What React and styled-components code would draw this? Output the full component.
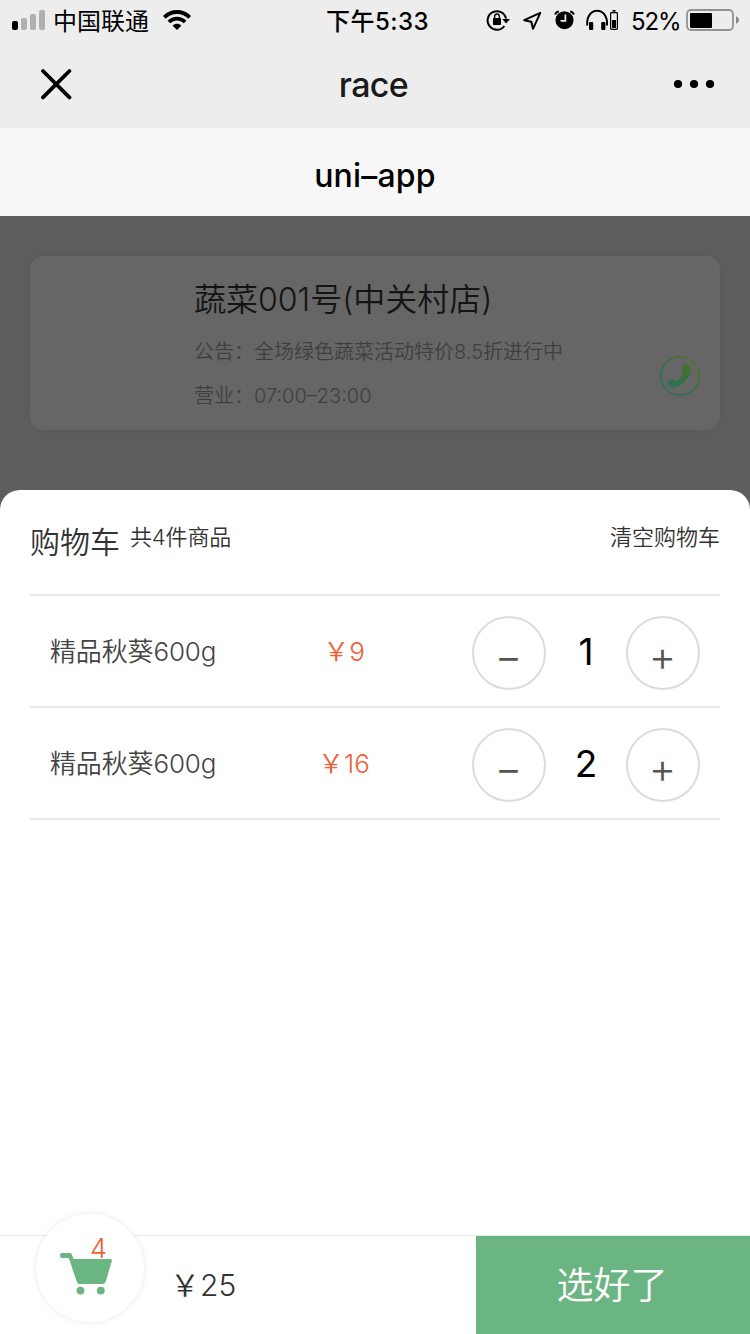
import React from 'react';
import styled, { createGlobalStyle } from 'styled-components';

const GlobalStyle = createGlobalStyle`
  * { box-sizing: border-box; }
  body {
    margin: 0;
    font-family: Inter, "Noto Sans CJK SC", sans-serif;
    font-weight: 350;
    color: #333;
  }
  svg { display: block; flex: none; }
`;

const Screen = styled.div`
  width: 750px;
  height: 1334px;
  display: flex;
  flex-direction: column;
  overflow: hidden;
  background: #5f5f5f;
`;

const Chrome = styled.header`
  height: 128px;
  background: #ededed;
  flex: none;
`;

const StatusBar = styled.div`
  height: 40px;
  display: grid;
  grid-template-columns: 1fr 110px 1fr;
  grid-template-rows: 40px;
  align-items: center;
  color: #000;
`;

const StatusGroup = styled.div`
  display: flex;
  align-items: center;
  height: 40px;
  justify-content: ${(p) => (p.$end ? 'flex-end' : 'flex-start')};
  padding: ${(p) => (p.$end ? '0 11px 0 0' : '0 0 0 12px')};
`;

const Carrier = styled.span`
  font-size: 24px;
  line-height: 38px;
  font-weight: 400;
  padding-top: 3px;
  margin: 0 14px 0 8px;
`;

const Clock = styled.div`
  font-size: 24px;
  line-height: 38px;
  font-weight: 500;
  text-align: center;
  white-space: nowrap;
  letter-spacing: 0.5px;
  padding: 3px 0 0 5px;
`;

const Percent = styled.span`
  font-size: 24px;
  line-height: 38px;
  font-weight: 400;
  width: 48px;
  padding-top: 3px;
  margin: 0 7px 0 13px;
  letter-spacing: -1.1px;
  white-space: nowrap;
`;

const NavBar = styled.div`
  height: 88px;
  padding: 0 35px 0 40px;
  display: grid;
  grid-template-columns: 34px 1fr 42px;
  grid-template-rows: 88px;
  align-items: center;
`;

const NavTitle = styled.div`
  text-align: center;
  font-size: 34px;
  line-height: 86px;
  font-weight: 450;
  letter-spacing: -0.6px;
  color: #1a1a1a;
  padding-top: 2px;
`;

const PageTitle = styled.h1`
  margin: 0;
  height: 88px;
  flex: none;
  background: #f7f7f7;
  text-align: center;
  font-size: 32px;
  line-height: 96px;
  font-weight: 500;
  letter-spacing: 0.2px;
  color: #000;
`;

const ShopArea = styled.section`
  height: 274px;
  flex: none;
  padding: 40px 30px 0;
`;

const ShopCard = styled.div`
  height: 174px;
  padding: 21px 20px 0 164px;
  border-radius: 14px;
  background: #666;
  box-shadow: 0 0 20px rgba(0, 0, 0, 0.1);
  display: flex;
  justify-content: space-between;
`;

const ShopName = styled.div`
  font-size: 32px;
  line-height: 46px;
  color: #141414;
  white-space: nowrap;
`;

const ShopLine = styled.div`
  font-size: 20px;
  line-height: 44px;
  color: #3f3f3f;
  white-space: nowrap;
  position: relative;
  top: 7px;
`;

const CallButton = styled.div`
  padding-top: 79px;
`;

const Sheet = styled.main`
  flex: 1;
  margin: 0 0 -20px;
  padding: 0 30px;
  border-radius: 20px 20px 0 0;
  background: #fff;
`;

const SheetHeader = styled.div`
  height: 106px;
  padding-top: 29px;
  border-bottom: 2px solid #e8e8e8;
  display: flex;
  align-items: flex-start;
`;

const SheetTitle = styled.div`
  font-size: 30px;
  line-height: 46px;
  margin-right: 10px;
`;

const SheetNote = styled.div`
  font-size: 22px;
  line-height: 36px;
  letter-spacing: -0.15px;
`;

const ClearButton = styled(SheetNote)`
  margin-left: auto;
  letter-spacing: 0;
`;

const Row = styled.div`
  height: 112px;
  padding: 0 20px;
  border-bottom: 2px solid #e8e8e8;
  display: grid;
  grid-template-columns: 204px 180px 1fr;
  grid-template-rows: 110px;
`;

const ItemName = styled.div`
  font-size: 26px;
  line-height: 112px;
  letter-spacing: -0.15px;
  color: #444;
  white-space: nowrap;
`;

const Price = styled.div`
  font-size: 26px;
  line-height: 112px;
  color: #ec6237;
  text-align: center;
  white-space: nowrap;
`;

const Stepper = styled.div`
  margin-left: auto;
  width: 228px;
  padding-top: 4px;
  display: flex;
  align-items: center;
  justify-content: space-between;
`;

const RoundButton = styled.div`
  width: 74px;
  height: 74px;
  border: 2px solid #dcdcdc;
  border-radius: 50%;
  font-size: 42px;
  font-weight: 300;
  line-height: 76px;
  text-align: center;
  color: #555;
  text-indent: -1px;
`;

const Quantity = styled.div`
  font-size: 37px;
  line-height: 70px;
  font-weight: 400;
  color: #000;
  margin-top: -3px;
`;

const Footer = styled.footer`
  height: 99px;
  flex: none;
  border-top: 1px solid #e9e9e9;
  background: #fff;
  display: flex;
  position: relative;
`;

const CartBubble = styled.div`
  position: absolute;
  left: 36px;
  top: -22px;
  width: 108px;
  height: 108px;
  border-radius: 50%;
  background: #fff;
  box-shadow: 0 0 6px rgba(0, 0, 0, 0.09);
  display: flex;
  align-items: center;
  justify-content: center;
  padding: 11px 8px 0 0;
`;

const CartCount = styled.span`
  position: absolute;
  left: 54px;
  top: 20px;
  font-size: 27px;
  line-height: 30px;
  color: #ec6237;
`;

const Total = styled.div`
  flex: 1;
  padding-left: 170px;
  font-size: 30px;
  line-height: 98px;
  white-space: nowrap;
`;

const ConfirmButton = styled.div`
  width: 274px;
  background: #6bb583;
  color: #fff;
  font-size: 37px;
  line-height: 100px;
  text-align: center;
  text-indent: -2px;
`;

const Signal = () => (
  <svg width="33" height="20" viewBox="0 0 33 20">
    <rect x="0" y="11" width="6" height="9" rx="2" fill="#000" />
    <rect x="9" y="8" width="6" height="12" rx="2" fill="#b0b0b0" />
    <rect x="18" y="4" width="6" height="16" rx="2" fill="#b0b0b0" />
    <rect x="27" y="0" width="6" height="20" rx="2" fill="#b0b0b0" />
  </svg>
);

const Wifi = () => (
  <svg width="28" height="20" viewBox="0 0 28 20" fill="none" stroke="#000" strokeWidth="3.8">
    <path d="M1.3 7.3C8.4 0.2 19.6 0.2 26.7 7.3" />
    <path d="M5.9 12C10.5 7.5 17.5 7.5 22.1 12" />
    <path d="M14 20L9.7 15.7C12 13.2 16 13.2 18.3 15.7Z" fill="#000" stroke="none" />
  </svg>
);

const StatusIcons = () => (
  <svg width="132" height="22" viewBox="486 9 132 22" fill="none" stroke="#000" strokeWidth="2">
    <path d="M504.4 26A9.3 9.3 0 1 1 506 18.6" />
    <path d="M502.2 19H510L506.1 23.4Z" fill="#000" stroke="none" />
    <rect x="493" y="18" width="8" height="7" rx="0.8" fill="#000" stroke="none" />
    <path d="M494.6 18.5V16.8A2.4 2.8 0 0 1 499.4 16.8V18.5" strokeWidth="1.4" />
    <path d="M540.3 12.8L524.2 20.2L531.3 21.7L533 28.8Z" strokeLinejoin="round" />
    <circle cx="564.5" cy="20.2" r="9" fill="#000" stroke="none" />
    <path d="M565.4 14.5V20.8H560.6" stroke="#ededed" strokeWidth="1.7" />
    <path d="M555.3 14.7C555.6 13 557 11.7 558.8 11.5M570.2 11.5C572 11.7 573.4 13 573.7 14.7" />
    <path d="M587.2 25.5C585.7 5.8 608.6 5.8 607 25.5" />
    <rect x="589" y="22" width="4.2" height="8" rx="1" fill="#000" stroke="none" />
    <rect x="601.2" y="22" width="4.2" height="8" rx="1" fill="#000" stroke="none" />
    <rect x="610.6" y="12.6" width="6.8" height="16.8" rx="0.8" strokeWidth="1.2" />
    <rect x="612" y="20" width="4" height="8" fill="#000" stroke="none" />
    <rect x="612.5" y="10" width="3" height="1.6" fill="#000" stroke="none" />
  </svg>
);

const Battery = () => (
  <svg width="53" height="22" viewBox="0 0 53 22">
    <rect x="1" y="1" width="46" height="20" rx="4" fill="none" stroke="#929292" strokeWidth="1.8" />
    <rect x="4" y="4" width="22" height="15" rx="1" fill="#000" />
    <path d="M50 7.3C54 8.6 54 13.4 50 14.7Z" fill="#8a8a8a" />
  </svg>
);

const CloseIcon = () => (
  <svg width="32" height="32" viewBox="0 0 32 32" stroke="#000" strokeWidth="3.8" strokeLinecap="round">
    <path d="M3 3L29.4 29.4M29.4 3L3 29.4" />
  </svg>
);

const MoreIcon = () => (
  <svg width="42" height="10" viewBox="0 0 42 10">
    <circle cx="5" cy="5" r="4.1" />
    <circle cx="21" cy="5" r="4.1" />
    <circle cx="37" cy="5" r="4.1" />
  </svg>
);

const PhoneIcon = () => (
  <svg width="40" height="40" viewBox="0 0 40 40">
    <defs>
      <linearGradient id="call" gradientUnits="userSpaceOnUse" x1="8" y1="32" x2="32" y2="8">
        <stop offset="0" stopColor="#2b7060" />
        <stop offset="0.55" stopColor="#36713f" />
        <stop offset="1" stopColor="#52702c" />
      </linearGradient>
    </defs>
    <circle cx="20" cy="20" r="19.1" fill="none" stroke="url(#call)" strokeWidth="1.7" />
    <path
      fill="url(#call)"
      stroke="url(#call)"
      strokeWidth="0.7"
      d="M24.5 8.8C26 7.9 28.8 8.4 30 10.3C32.1 14.2 29.6 19.8 25.6 24.3C21.4 28.9 16 32.5 11.4 31.1C9.3 30.4 7.8 28.5 8.2 26.5C8.6 24.8 9.9 25.3 11.1 24.4C12.4 23.5 13.3 23.3 14.2 24.3C15.2 25.4 16 25.3 17.6 24C20.1 22 22.1 19.9 23.1 17.9C23.7 16.7 23.3 16.2 22.4 15.5C21.5 14.7 21.5 13.8 22.2 12.7C22.9 11.6 22.6 9.9 24.5 8.8Z"
    />
  </svg>
);

const CartIcon = () => (
  <svg width="52" height="42" viewBox="0 0 52 42" fill="#6bb583">
    <path d="M2 0H9.5C10.7 0 11.5 0.6 11.9 1.6L13.5 6H50C51.4 6 52.2 7 51.8 8.3L46 27.8C45.3 29.9 44.3 31 42.3 31H20C18.2 31 17.3 30.1 16.6 28.3L8.8 5H2C-0.8 5-0.8 0 2 0Z" />
    <circle cx="20.5" cy="37.6" r="3.9" />
    <circle cx="40.8" cy="37.6" r="3.9" />
  </svg>
);

const items = [
  { id: 1, name: '精品秋葵600g', price: '9', count: 1 },
  { id: 2, name: '精品秋葵600g', price: '16', count: 2 },
];

export default function App() {
  return (
    <>
      <GlobalStyle />
      <Screen>
        <Chrome>
          <StatusBar>
            <StatusGroup>
              <Signal />
              <Carrier>中国联通</Carrier>
              <Wifi />
            </StatusGroup>
            <Clock>下午5:33</Clock>
            <StatusGroup $end>
              <StatusIcons />
              <Percent>52%</Percent>
              <Battery />
            </StatusGroup>
          </StatusBar>
          <NavBar>
            <CloseIcon />
            <NavTitle>race</NavTitle>
            <MoreIcon />
          </NavBar>
        </Chrome>
        <PageTitle>uni–app</PageTitle>
        <ShopArea>
          <ShopCard>
            <div>
              <ShopName>蔬菜001号(中关村店)</ShopName>
              <ShopLine>公告：全场绿色蔬菜活动特价8.5折进行中</ShopLine>
              <ShopLine>营业：07:00–23:00</ShopLine>
            </div>
            <CallButton>
              <PhoneIcon />
            </CallButton>
          </ShopCard>
        </ShopArea>
        <Sheet>
          <SheetHeader>
            <SheetTitle>购物车</SheetTitle>
            <SheetNote>共4件商品</SheetNote>
            <ClearButton>清空购物车</ClearButton>
          </SheetHeader>
          {items.map((item) => (
            <Row key={item.id}>
              <ItemName>{item.name}</ItemName>
              <Price>￥{item.price}</Price>
              <Stepper>
                <RoundButton>−</RoundButton>
                <Quantity>{item.count}</Quantity>
                <RoundButton>+</RoundButton>
              </Stepper>
            </Row>
          ))}
        </Sheet>
        <Footer>
          <CartBubble>
            <CartIcon />
            <CartCount>4</CartCount>
          </CartBubble>
          <Total>￥25</Total>
          <ConfirmButton>选好了</ConfirmButton>
        </Footer>
      </Screen>
    </>
  );
}
